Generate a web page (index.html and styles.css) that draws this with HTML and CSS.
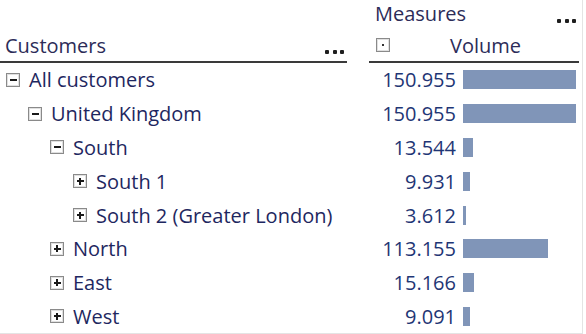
FILE: index.html
```html
<!DOCTYPE html>
<html>
<head>
<meta charset="utf-8">
<link rel="stylesheet" href="styles.css">
</head>
<body>
<div class="pivot">
  <div class="corner"></div>
  <div class="measures-head">
    <span class="title">Measures</span>
    <span class="dots"><i></i><i></i><i></i></span>
  </div>

  <div class="dim-head">
    <span class="title">Customers</span>
    <span class="dots"><i></i><i></i><i></i></span>
  </div>
  <div class="val-head">
    <span class="toggle dot"></span>
    <span class="title vol">Volume</span>
  </div>

  <div class="member lvl0"><span class="toggle minus"></span><span class="name">All customers</span></div>
  <div class="value"><span class="num">150.955</span><span class="track"><span class="bar" style="width:113px"></span></span></div>

  <div class="member lvl1"><span class="toggle minus"></span><span class="name">United Kingdom</span></div>
  <div class="value"><span class="num">150.955</span><span class="track"><span class="bar" style="width:113px"></span></span></div>

  <div class="member lvl2"><span class="toggle minus"></span><span class="name">South</span></div>
  <div class="value"><span class="num">13.544</span><span class="track"><span class="bar" style="width:10.1px"></span></span></div>

  <div class="member lvl3"><span class="toggle plus"></span><span class="name">South 1</span></div>
  <div class="value"><span class="num">9.931</span><span class="track"><span class="bar" style="width:7.4px"></span></span></div>

  <div class="member lvl3"><span class="toggle plus"></span><span class="name">South 2 (Greater London)</span></div>
  <div class="value"><span class="num">3.612</span><span class="track"><span class="bar" style="width:2.7px"></span></span></div>

  <div class="member lvl2"><span class="toggle plus"></span><span class="name">North</span></div>
  <div class="value"><span class="num">113.155</span><span class="track"><span class="bar" style="width:84.7px"></span></span></div>

  <div class="member lvl2"><span class="toggle plus"></span><span class="name">East</span></div>
  <div class="value"><span class="num">15.166</span><span class="track"><span class="bar" style="width:11.4px"></span></span></div>

  <div class="member lvl2"><span class="toggle plus"></span><span class="name">West</span></div>
  <div class="value"><span class="num">9.091</span><span class="track"><span class="bar" style="width:6.8px"></span></span></div>
</div>
</body>
</html>
```

FILE: styles.css
```css
html, body {
  margin: 0;
  padding: 0;
  background: #ffffff;
}

body {
  font-family: "Open Sans", "DejaVu Sans", sans-serif;
  font-size: 20px;
  line-height: 27px;
  color: #1e2760;
}

.pivot {
  display: grid;
  grid-template-columns: 347px 210px;
  column-gap: 22px;
  width: 582px;
  height: 333px;
  border-right: 1px solid #e4e4e4;
  border-bottom: 1px solid #e4e4e4;
  overflow: hidden;
}

.corner {
  height: 28px;
}

.measures-head {
  height: 28px;
  display: flex;
  justify-content: space-between;
  align-items: flex-start;
  padding: 0 3px 0 6px;
}

.title {
  color: #2c2c58;
}

.dots {
  display: flex;
  gap: 3.5px;
  margin-top: 19px;
}

.dots i {
  display: block;
  width: 4px;
  height: 4px;
  border-radius: 1px;
  background: #1e1e1e;
}

.dim-head,
.val-head {
  display: flex;
  align-items: flex-start;
  padding-top: 4px;
  height: 29px;
  border-bottom: 2px solid #3a3a3a;
}

.dim-head {
  justify-content: space-between;
  padding-left: 5px;
  padding-right: 3px;
}

.dim-head .dots {
  margin-top: 18px;
}

.val-head {
  padding-left: 7px;
}

.val-head .toggle {
  margin-top: 6px;
}

.val-head .vol {
  margin-left: 60px;
}

.toggle {
  position: relative;
  flex: none;
  width: 14px;
  height: 14px;
  box-sizing: border-box;
  border: 1px solid #8a8a8a;
  box-shadow: inset 0 0 0 1px #e0e0e0;
  background: #ffffff;
}

.toggle.minus::before,
.toggle.plus::before {
  content: "";
  position: absolute;
  left: 2.5px;
  top: 5px;
  width: 7px;
  height: 2px;
  background: #1a1a1a;
}

.toggle.plus::after {
  content: "";
  position: absolute;
  left: 5px;
  top: 2.5px;
  width: 2px;
  height: 7px;
  background: #1a1a1a;
}

.toggle.dot::before {
  content: "";
  position: absolute;
  left: 5px;
  top: 5px;
  width: 2px;
  height: 2px;
  background: #333333;
}

.member {
  display: flex;
  align-items: center;
  height: 33.8px;
  white-space: nowrap;
}

.member .toggle {
  margin-right: 9px;
}

.lvl0 { padding-left: 6px; }
.lvl1 { padding-left: 28px; }
.lvl2 { padding-left: 50px; }
.lvl3 { padding-left: 73px; }

.value {
  display: flex;
  align-items: center;
  height: 33.8px;
}

.num {
  width: 87px;
  text-align: right;
  color: #1f3675;
}

.track {
  display: flex;
  align-items: center;
  margin-left: 7px;
  width: 113px;
}

.bar {
  display: block;
  height: 19px;
  background: #8095b8;
}
```
